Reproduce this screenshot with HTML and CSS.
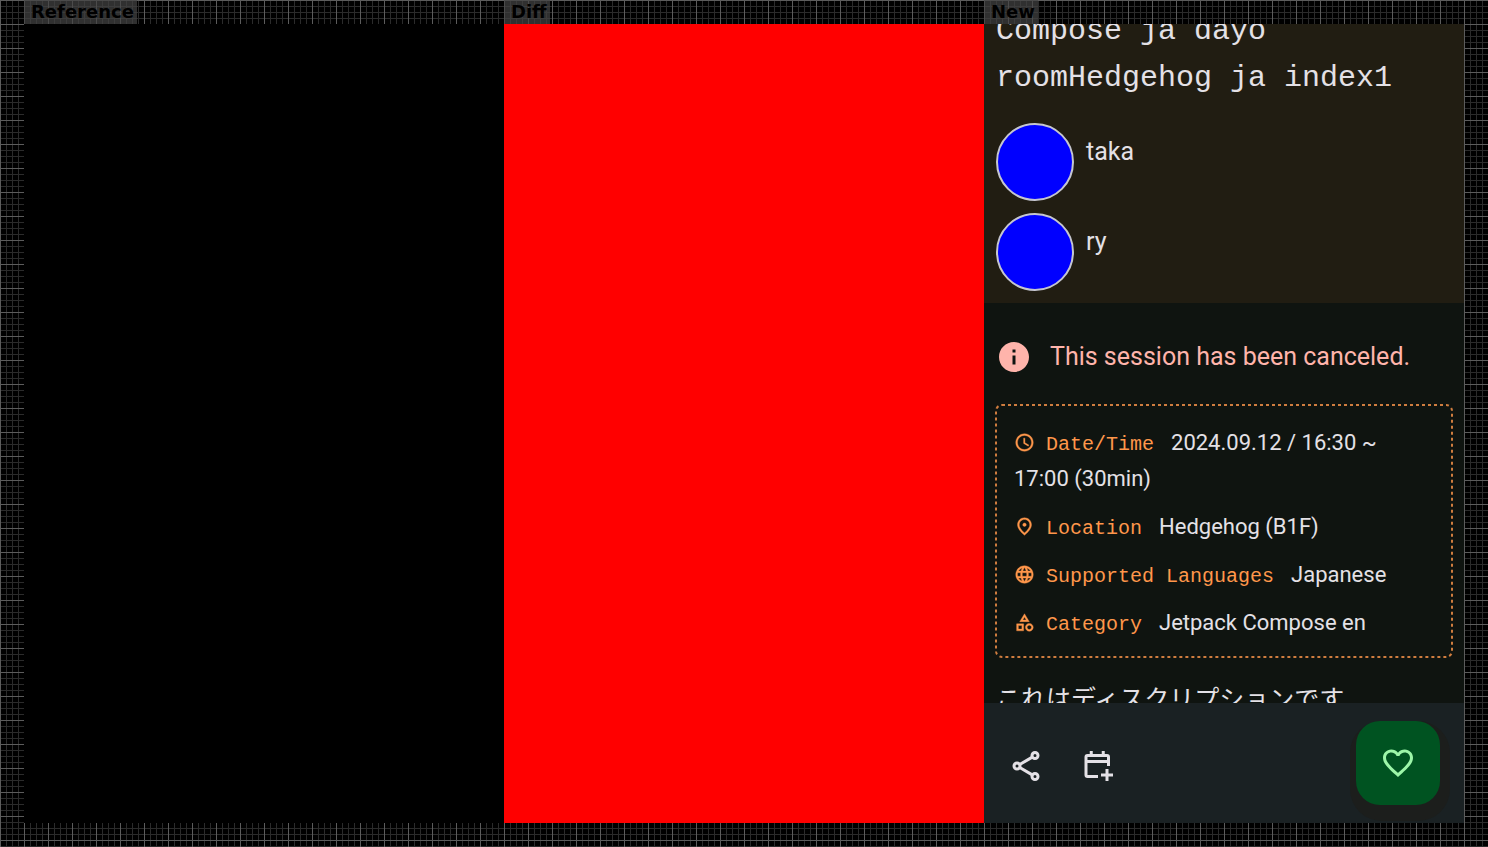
FILE: index.html
```html
<!DOCTYPE html>
<html lang="en">
<head>
<meta charset="utf-8">
<title>Screenshot comparison</title>
<link rel="stylesheet" href="styles.css">
</head>
<body>
<main class="board">
  <section class="pane">
    <h2 class="pane-label">Reference</h2>
    <div class="pane-body pane-body--empty"></div>
  </section>
  <section class="pane">
    <h2 class="pane-label">Diff</h2>
    <div class="pane-body pane-body--diff"></div>
  </section>
  <section class="pane">
    <h2 class="pane-label">New</h2>
    <div class="pane-body app">
      <div class="scroll">
        <header class="head">
          <h1 class="title">Compose ja dayo<br>roomHedgehog ja index1</h1>
          <ul class="speakers">
            <li class="speaker"><span class="avatar"></span><span class="speaker-name">taka</span></li>
            <li class="speaker"><span class="avatar"></span><span class="speaker-name">ry</span></li>
          </ul>
        </header>
        <p class="notice">
          <svg class="notice-icon" viewBox="0 0 24 24" aria-hidden="true"><path d="M12 2C6.48 2 2 6.48 2 12s4.480 10 10 10 10-4.480 10-10S17.520 2 12 2zm1 15h-2v-6h2v6zm0-8h-2V7h2v2z"/></svg>
          <span>This session has been canceled.</span>
        </p>
        <div class="details">
          <svg class="details-border" aria-hidden="true"><rect class="details-outline" width="100%" height="100%" rx="6"/></svg>
          <p class="detail"><svg class="detail-icon" viewBox="0 0 24 24" aria-hidden="true"><path d="M11.990 2C6.470 2 2 6.480 2 12s4.470 10 9.990 10C17.520 22 22 17.520 22 12S17.520 2 11.990 2zM12 20c-4.420 0-8-3.580-8-8s3.580-8 8-8 8 3.580 8 8-3.580 8-8 8zm.5-13H11v6l5.250 3.150.75-1.230-4.500-2.670z"/></svg><span class="detail-label">Date/Time</span><span class="detail-value">2024.09.12 / 16:30 ~ 17:00&nbsp;(30min)</span></p>
          <p class="detail"><svg class="detail-icon" viewBox="0 0 24 24" aria-hidden="true"><path d="M12 12c1.100 0 2-.9 2-2s-.9-2-2-2-2 .9-2 2 .9 2 2 2zm6-1.800C18 6.570 15.350 4 12 4s-6 2.570-6 6.200c0 2.340 1.950 5.440 6 9.140 4.050-3.700 6-6.800 6-9.140zM12 2c4.200 0 8 3.220 8 8.200 0 3.320-2.670 7.250-8 11.800-5.330-4.550-8-8.480-8-11.800C4 5.220 7.800 2 12 2z"/></svg><span class="detail-label">Location</span><span class="detail-value">Hedgehog (B1F)</span></p>
          <p class="detail"><svg class="detail-icon" viewBox="0 0 24 24" aria-hidden="true"><path d="M11.990 2C6.470 2 2 6.480 2 12s4.470 10 9.990 10C17.520 22 22 17.520 22 12S17.520 2 11.990 2zm6.930 6h-2.950c-.32-1.250-.78-2.450-1.380-3.560 1.840.63 3.370 1.910 4.330 3.560zM12 4.040c.83 1.200 1.480 2.530 1.910 3.960h-3.820c.43-1.430 1.080-2.760 1.910-3.960zM4.260 14C4.100 13.360 4 12.690 4 12s.1-1.360.26-2h3.380c-.08.66-.14 1.320-.14 2s.06 1.340.14 2H4.260zm.82 2h2.950c.32 1.250.78 2.450 1.380 3.560-1.840-.63-3.370-1.900-4.330-3.560zm2.950-8H5.080c.96-1.660 2.490-2.930 4.330-3.560C8.810 5.550 8.350 6.750 8.030 8zM12 19.960c-.83-1.200-1.480-2.530-1.910-3.960h3.820c-.43 1.430-1.080 2.760-1.910 3.960zM14.340 14H9.660c-.09-.66-.16-1.320-.16-2s.07-1.350.16-2h4.680c.09.65.16 1.320.16 2s-.07 1.340-.16 2zm.25 5.560c.6-1.110 1.060-2.310 1.380-3.560h2.950c-.96 1.650-2.490 2.930-4.330 3.560zM16.360 14c.08-.66.14-1.320.14-2s-.06-1.340-.14-2h3.380c.16.64.26 1.310.26 2s-.1 1.360-.26 2h-3.380z"/></svg><span class="detail-label">Supported Languages</span><span class="detail-value">Japanese</span></p>
          <p class="detail"><svg class="detail-icon" viewBox="0 0 24 24" aria-hidden="true"><path d="M12 2l-5.500 9h11L12 2zm0 3.840L13.930 9h-3.870L12 5.840zM17.500 13c-2.490 0-4.500 2.010-4.500 4.500s2.010 4.500 4.500 4.500 4.500-2.010 4.500-4.500-2.010-4.500-4.500-4.500zm0 7c-1.380 0-2.500-1.120-2.500-2.500s1.120-2.500 2.500-2.500 2.500 1.120 2.500 2.500-1.120 2.500-2.500 2.500zM3 21.500h8v-8H3v8zm2-6h4v4H5v-4z"/></svg><span class="detail-label">Category</span><span class="detail-value">Jetpack Compose en</span></p>
        </div>
        <p class="description" lang="ja">これはディスクリプションです</p>
      </div>
      <footer class="bar">
        <button class="icon-button" type="button" aria-label="Share"><svg class="bar-icon bar-icon--line" viewBox="0 0 24 24" aria-hidden="true"><circle cx="18" cy="5" r="2"/><circle cx="6" cy="12" r="2"/><circle cx="18" cy="19" r="2"/><path d="M7.800 11l8.400-4.900M7.800 13l8.400 4.900"/></svg></button>
        <button class="icon-button" type="button" aria-label="Add to calendar"><svg class="bar-icon bar-icon--line" viewBox="0 0 24 24" aria-hidden="true"><path d="M12 19H5q-1 0-1-1V6q0-1 1-1h13q1 0 1 1v6M4 9h15M7.500 2v3M15.500 2v3M18 14v8M14 18h8"/></svg></button>
        <button class="fab" type="button" aria-label="Add to favorites"><svg class="bar-icon" viewBox="0 0 24 24" aria-hidden="true"><path d="M16.500 3c-1.740 0-3.410.81-4.500 2.090C10.910 3.810 9.240 3 7.500 3 4.420 3 2 5.420 2 8.500c0 3.780 3.400 6.860 8.550 11.540L12 21.350l1.450-1.320C18.600 15.360 22 12.280 22 8.500 22 5.420 19.580 3 16.500 3zm-4.400 15.550l-.1.1-.1-.1C7.140 14.240 4 11.390 4 8.500 4 6.500 5.500 5 7.500 5c1.540 0 3.040.99 3.570 2.360h1.870C13.460 5.990 14.960 5 16.500 5c2 0 3.500 1.500 3.500 3.500 0 2.890-3.140 5.740-7.900 10.050z"/></svg></button>
      </footer>
    </div>
  </section>
</main>
</body>
</html>
```

FILE: styles.css
```css
* {
  box-sizing: border-box;
}

body,
h1,
h2,
p,
ul {
  margin: 0;
  padding: 0;
}

body {
  background-color: #000;
  background-image:
    linear-gradient(to right, #5c5c5c 1px, transparent 1px),
    linear-gradient(#5c5c5c 1px, transparent 1px),
    linear-gradient(to right, #2b2b2b 1px, transparent 1px),
    linear-gradient(#2b2b2b 1px, transparent 1px);
  background-size: 24px 24px, 24px 24px, 6px 6px, 6px 6px;
  font-family: Roboto, "Noto Sans CJK JP", sans-serif;
  color: #e4e1e6;
}

.board {
  display: grid;
  grid-template-columns: repeat(3, minmax(0, 1fr));
  min-height: 100vh;
  padding: 0 24px 24px;
}

.pane {
  display: flex;
  flex-direction: column;
  align-items: flex-start;
}

.pane-label {
  height: 24px;
  padding: 0 3px 0 7px;
  background: rgba(68, 68, 68, 0.7);
  color: #000;
  font: bold 18px/24px "DejaVu Sans", sans-serif;
}

.pane-body {
  flex: 1;
  width: 100%;
}

.pane-body--empty {
  background: #000;
}

.pane-body--diff {
  background: #f00;
}

.app {
  display: flex;
  flex-direction: column;
  background: #0f1410;
}

.scroll {
  flex: 1 1 0;
  display: flex;
  flex-direction: column;
  min-height: 0;
  overflow: hidden;
}

.head {
  display: flex;
  flex-direction: column;
  gap: 21px;
  padding: 0 12px 12px;
  background: #211d12;
}

.title {
  margin-top: -16px;
  font: 30px/47px "Liberation Mono", monospace;
}

.speakers {
  display: flex;
  flex-direction: column;
  gap: 12px;
  list-style: none;
}

.speaker {
  display: flex;
  gap: 12px;
}

.avatar {
  width: 78px;
  height: 78px;
  border: 2px solid #c5c6d0;
  border-radius: 50%;
  background: #00f;
}

.speaker-name {
  padding-top: 11px;
  font-size: 25px;
  line-height: 36px;
}

.notice {
  display: flex;
  align-items: center;
  gap: 18px;
  padding: 36px 12px 30px;
  color: #ffb4ab;
  font-size: 25px;
  line-height: 36px;
}

.notice-icon {
  width: 36px;
  height: 36px;
  fill: #ffb4ab;
}

.details {
  position: relative;
  display: flex;
  flex-direction: column;
  gap: 12px;
  margin: 0 12px;
  padding: 20px 18px 16px;
  font-size: 22px;
  line-height: 36px;
}

.details-border {
  position: absolute;
  inset: 0;
  width: 100%;
  height: 100%;
  overflow: visible;
}

.details-outline {
  fill: none;
  stroke: #ff974b;
  stroke-width: 2px;
  stroke-dasharray: 3 3;
  opacity: 0.8;
}

.detail-icon {
  width: 21px;
  height: 21px;
  margin-right: 11px;
  fill: #ff974b;
  stroke: #ff974b;
  stroke-width: 0.4;
  vertical-align: -3px;
}

.detail-label {
  margin-right: 17px;
  color: #ff974b;
  font: 20px/20px "Liberation Mono", monospace;
}

.description {
  padding: 25px 12px 0;
  font-size: 25px;
  line-height: 36px;
  white-space: nowrap;
}

.bar {
  display: flex;
  align-items: center;
  padding: 18px 24px 18px 6px;
  background: #1a2123;
}

.icon-button,
.fab {
  display: flex;
  align-items: center;
  justify-content: center;
  padding: 0;
  border: 0;
}

.icon-button {
  width: 72px;
  height: 72px;
  padding-top: 6px;
  background: none;
  color: #e4e1e6;
}

.bar-icon {
  width: 36px;
  height: 36px;
  fill: currentColor;
}

.bar-icon--line {
  fill: none;
  stroke: currentColor;
  stroke-width: 2;
}

.fab {
  width: 84px;
  height: 84px;
  margin-left: auto;
  border-radius: 24px;
  background: #005321;
  box-shadow: 2px 8px 0 8px #1c1e1c;
  color: #9df6a9;
}
```
